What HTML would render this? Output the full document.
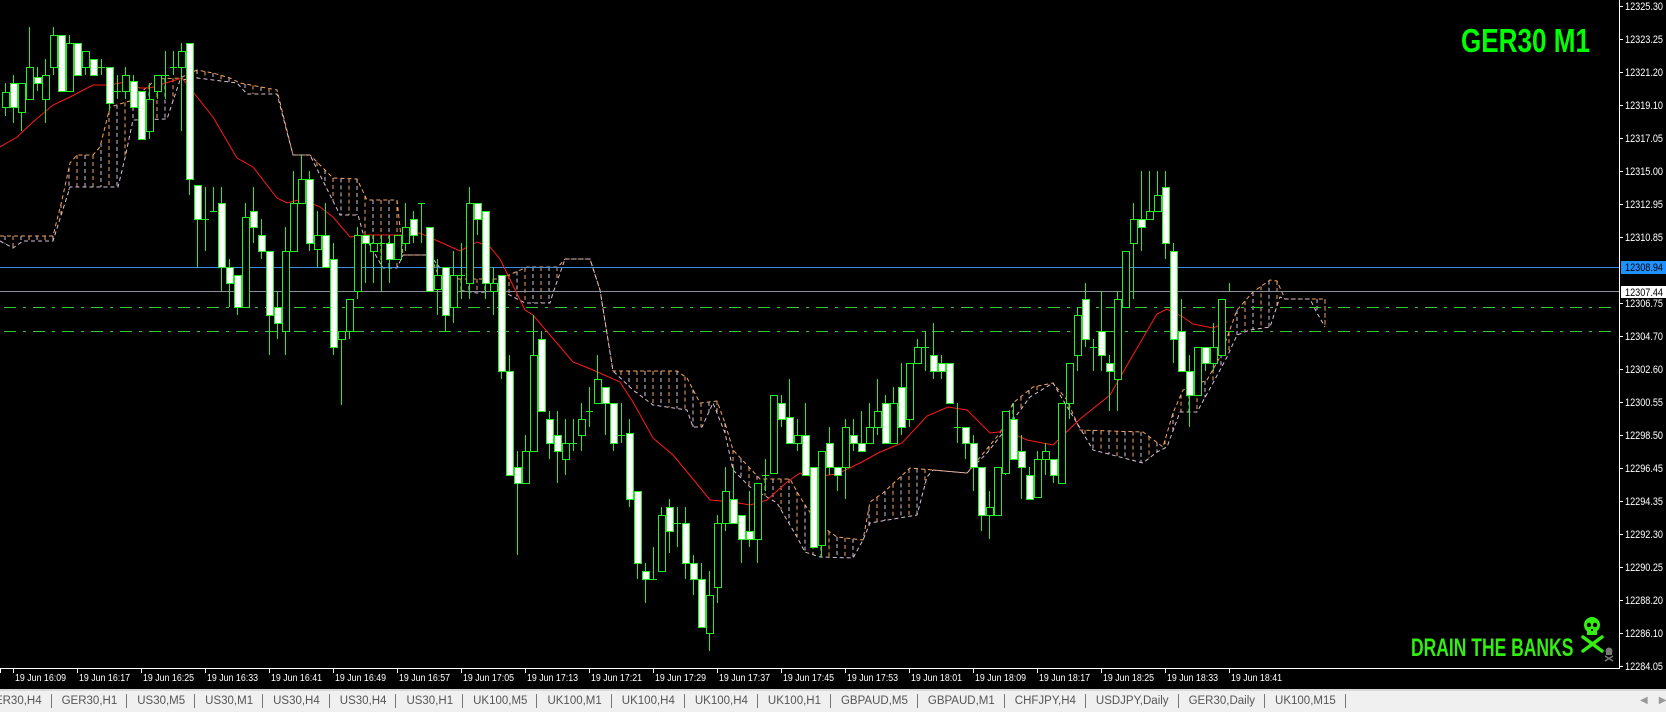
<!DOCTYPE html>
<html><head><meta charset="utf-8"><style>
html,body{margin:0;padding:0;background:#000;width:1666px;height:712px;overflow:hidden;font-family:"Liberation Sans",sans-serif}
#c{position:absolute;left:0;top:0}
.tabs{position:absolute;left:0;top:689px;width:1666px;height:23px;background:#f0f0f0;border-top:2px solid #d8d8d8;box-sizing:border-box;white-space:nowrap;font-size:11.5px;color:#555}
.tabs span{display:inline-block;padding:0 9px 0 10px;border-right:1px solid #777;line-height:14px;margin-top:3px}
.t1{position:absolute;left:1461px;top:22px;color:#00ff00;font-weight:bold;font-size:33px;transform:scaleX(0.79);transform-origin:0 0;letter-spacing:0px}
.t2{position:absolute;left:1411px;top:634px;color:#33ee11;font-weight:bold;font-size:25px;transform:scaleX(0.70);transform-origin:0 0}
</style></head><body>
<svg id="c" width="1666" height="712" xmlns="http://www.w3.org/2000/svg"></svg>
<div class="t1">GER30 M1</div>
<div class="t2">DRAIN THE BANKS</div>
<div class="tabs"><span style="margin-left:-24px">GER30,H4</span><span>GER30,H1</span><span>US30,M5</span><span>US30,M1</span><span>US30,H4</span><span>US30,H4</span><span>US30,H1</span><span>UK100,M5</span><span>UK100,M1</span><span>UK100,H4</span><span>UK100,H4</span><span>UK100,H1</span><span>GBPAUD,M5</span><span>GBPAUD,M1</span><span>CHFJPY,H4</span><span>USDJPY,Daily</span><span>GER30,Daily</span><span>UK100,M15</span><span style="position:absolute;left:1630px;border:none;color:#999;font-size:10px">◀&nbsp;&nbsp;&nbsp;&nbsp;▶</span></div>
<script>
var s='';
function L(x1,y1,x2,y2,c,w,d){s+='<line x1="'+x1+'" y1="'+y1+'" x2="'+x2+'" y2="'+y2+'" stroke="'+c+'" stroke-width="'+(w||1)+'"'+(d?' stroke-dasharray="'+d+'"':'')+'/>';}
function T(x,y,t,c,sz,tl){s+='<text x="'+x+'" y="'+y+'" fill="'+c+'" font-size="'+sz+'" font-family="Liberation Sans,sans-serif"'+(tl?' textLength="'+tl+'" lengthAdjust="spacingAndGlyphs"':'')+'>'+t+'</text>';}
function interp(P,x){for(var i=0;i<P.length-1;i++){if(x>=P[i][0]&&x<=P[i+1][0]){var a=P[i],b=P[i+1];if(b[0]==a[0])return a[1];return a[1]+(b[1]-a[1])*(x-a[0])/(b[0]-a[0]);}}return null;}
var U=[[0,236],[53,236],[62,200],[70,163],[77,155],[93,155],[100,147],[110,107],[133,100],[147,87],[157,79],[180,78],[197,70],[213,73],[230,78],[240,83],[277,90],[293,155],[310,155],[333,178],[357,179],[367,200],[397,200],[403,255],[430,255],[440,279],[500,279],[527,267],[558,267],[565,259],[590,259],[600,290],[613,371],[677,371],[687,378],[700,403],[717,401],[725,423],[733,450],[760,479],[790,479],[800,497],[817,523],[837,537],[863,540],[870,502],[883,493],[910,468],[933,470],[967,473],[1000,433],[1013,403],[1033,387],[1053,383],[1067,400],[1080,430],[1143,432],[1163,447],[1173,413],[1183,390],[1207,380],[1220,357],[1237,310],[1253,292],[1270,280],[1277,281],[1285,299],[1325,299],[1325,327]];
var Lw=[[0,241],[13,248],[23,241],[53,241],[70,187],[118,187],[125,158],[133,120],[167,119],[180,80],[197,78],[237,83],[247,94],[277,94],[293,155],[310,155],[340,215],[358,215],[363,233],[383,268],[397,268],[403,255],[430,255],[457,290],[477,293],[500,290],[525,303],[550,303],[553,293],[565,259],[590,259],[600,290],[613,371],[633,390],[653,405],[687,410],[693,427],[702,427],[713,403],[725,433],[733,470],[750,487],[777,503],[797,537],[805,552],[820,557],[853,558],[863,540],[870,523],[917,515],[927,477],[933,470],[967,473],[987,453],[1013,420],[1030,397],[1053,383],[1063,400],[1080,428],[1093,450],[1143,463],[1157,452],[1167,447],[1180,412],[1197,412],[1213,383],[1227,357],[1237,335],[1250,330],[1270,327],[1280,297],[1285,299],[1310,299],[1317,313],[1325,327]];
for(var x=5;x<=1325;x+=8){var a=interp(U,x),b=interp(Lw,x);if(a==null||b==null)continue;if(Math.abs(a-b)>4){L(x,Math.min(a,b),x,Math.max(a,b),(x/8|0)%2?'#f4a460':'#d8bfd8',1,'4,3');}}
function poly(P,c){var p=P.map(function(q){return q.join(',')}).join(' ');s+='<polyline points="'+p+'" fill="none" stroke="'+c+'" stroke-width="1" stroke-dasharray="4,3"/>';}
poly(U,'#f4a460');poly(Lw,'#d8bfd8');
L(0,267.5,1619,267.5,'#3a8ee6',1);L(0,291.5,1619,291.5,'#8890a0',1);
L(4,307.5,1617,307.5,'#33cc33',1,'12,7,3,7');L(4,331.5,1617,331.5,'#33cc33',1,'12,7,3,7');
var M=[[0,147],[17,137],[33,122],[53,105],[70,97],[93,85],[110,85],[125,82],[140,88],[150,88],[182,78],[213,117],[237,158],[253,167],[277,198],[287,203],[302,199],[320,207],[333,217],[350,237],[367,235],[400,235],[420,233],[440,242],[460,251],[477,242],[490,247],[500,259],[525,310],[533,315],[550,335],[573,362],[593,370],[620,382],[633,402],[653,438],[673,455],[693,479],[710,500],[733,502],[750,505],[767,500],[787,482],[800,473],[813,477],[837,474],[860,463],[880,452],[902,443],[927,416],[948,407],[967,410],[990,433],[1007,431],[1027,440],[1053,445],[1080,419],[1110,395],[1133,355],[1157,314],[1167,309],[1183,317],[1193,324],[1213,328],[1227,322]];
s+='<polyline points="'+M.map(function(q){return q.join(',')}).join(' ')+'" fill="none" stroke="#ff1a1a" stroke-width="1"/>';
var C=[[92,107,83,116,0],[83,107,75,123,1],[83,112,83,131,0],[67,99,27,99,0],[77,83,67,91,1],[75,99,59,123,0],[35,67,27,75,0],[35,91,35,91,1],[43,91,35,91,0],[43,75,43,75,1],[51,67,51,75,0],[59,75,59,75,1],[67,67,59,75,0],[67,103,67,111,1],[91,91,75,99,0],[75,91,67,99,0],[81,107,75,107,1],[91,139,91,139,1],[99,131,83,139,0],[75,91,75,99,0],[75,75,51,99,0],[67,67,51,75,0],[51,67,43,131,0],[43,179,43,195,1],[185,219,185,267,1],[219,219,187,251,0],[211,211,187,211,0],[203,267,187,291,1],[267,283,259,307,1],[275,307,275,315,1],[217,307,203,307,0],[211,227,187,243,1],[235,251,219,259,1],[251,315,251,355,1],[307,323,291,339,1],[251,331,227,355,0],[203,251,171,251,0],[179,203,155,203,0],[179,243,171,251,1],[235,249,211,267,0],[235,267,203,267,1],[259,347,243,355,1],[331,339,331,405,0],[299,331,299,339,0],[235,291,227,299,0],[235,243,235,283,1],[243,251,235,283,0],[243,243,235,291,0],[243,259,235,283,1],[235,259,235,259,0],[227,243,203,251,0],[219,235,211,243,1],[203,203,203,243,0],[227,291,227,291,1],[275,289,259,315,0],[267,315,267,331,1],[275,307,251,323,0],[275,275,243,299,0],[203,283,187,299,0],[203,219,203,235,1],[211,283,211,299,1],[283,291,267,315,0],[275,371,275,379,1],[371,475,355,475,1],[467,483,451,555,1],[451,483,435,483,0],[355,451,315,451,0],[339,411,331,411,1],[419,443,411,459,1],[435,451,411,483,1],[443,459,419,475,0],[443,443,419,451,0],[419,435,403,451,0],[411,411,387,427,0],[379,403,355,403,0],[387,403,387,435,1],[403,443,403,451,1],[435,435,403,443,0],[433,499,419,507,1],[491,563,491,579,1],[571,579,563,603,1],[579,579,547,579,0],[515,571,507,571,0],[507,531,499,553,1],[523,523,507,547,0],[523,563,507,579,1],[563,579,555,595,1],[579,627,563,627,1],[595,633,571,651,0],[523,587,515,603,0],[491,523,467,531,0],[499,523,467,523,1],[515,539,515,563,1],[531,539,491,547,1],[483,539,483,563,0],[475,475,459,491,0],[395,473,395,473,0],[403,419,395,427,1],[417,443,379,443,1],[435,443,419,451,0],[435,475,403,475,1],[467,547,467,547,1],[451,545,451,557,0],[443,467,427,475,1],[467,475,467,491,1],[427,467,419,499,0],[435,443,419,451,1],[443,451,411,451,1],[427,443,403,443,0],[411,427,379,435,0],[403,443,395,443,1],[403,443,387,443,0],[387,427,363,435,1],[363,419,363,427,0],[347,363,339,363,0],[347,347,331,371,0],[355,371,323,379,1],[363,371,355,379,1],[363,403,363,403,1],[427,427,403,443,0],[427,443,427,459,1],[443,467,435,491,1],[467,515,467,531,1],[507,515,491,539,0],[467,515,467,515,0],[411,473,411,475,0],[419,459,403,459,1],[451,467,435,499,1],[475,499,467,499,1],[459,497,451,497,0],[451,459,443,475,0],[459,475,459,483,1],[403,483,403,483,0],[363,403,363,419,0],[315,355,307,371,0],[299,339,283,347,1],[347,347,339,371,0],[331,355,291,371,1],[363,371,355,411,1],[299,379,291,411,0],[251,307,251,307,0],[219,243,203,299,0],[219,227,171,251,1],[211,219,171,219,0],[195,211,171,211,0],[187,243,171,259,1],[251,339,243,363,1],[331,371,299,371,1],[371,395,355,427,1],[347,395,347,395,0],[347,363,347,371,1],[347,363,323,371,0],[299,355,299,355,0],[null,null,283,291,0]];
var G='#22ee22';
for(var i=0;i<C.length;i++){var c=C[i],x=5+8*i;L(x+.5,c[2],x+.5,c[3],G,1);if(c[0]==null)continue;if(c[0]==c[1]){L(x-3,c[0]+.5,x+4,c[0]+.5,G,1);}else{s+='<rect x="'+(x-2.5)+'" y="'+(c[0]+.5)+'" width="7" height="'+(c[1]-c[0])+'" fill="'+(c[4]?'#fff':'#000')+'" stroke="'+G+'" stroke-width="1"/>';}}
L(1619.5,0,1619.5,669,'#fff',1);L(0,668.5,1620,668.5,'#fff',1);
var P=[['12325.30',6],['12323.25',39],['12321.20',72],['12319.10',105],['12317.05',138],['12315.00',171],['12312.95',204],['12310.85',237],['12306.75',303],['12304.70',336],['12302.60',369],['12300.55',402],['12298.50',435],['12296.45',468],['12294.35',501],['12292.30',534],['12290.25',567],['12288.20',600],['12286.10',633],['12284.05',666]];
P.forEach(function(p){L(1620,p[1]+.5,1623,p[1]+.5,'#fff',1);T(1625,p[1]+4,p[0],'#fff',11,38);});
s+='<rect x="1621" y="261" width="45" height="13" fill="#1e90ff"/>';T(1625,271,'12308.94','#000',11,38);
s+='<rect x="1621" y="286" width="45" height="12" fill="#fff"/>';T(1625,296,'12307.44','#000',11,38);
var tl=['16:09','16:17','16:25','16:33','16:41','16:49','16:57','17:05','17:13','17:21','17:29','17:37','17:45','17:53','18:01','18:09','18:17','18:25','18:33','18:41'];
L(0.5,669,0.5,673,'#fff',1);
tl.forEach(function(t,k){var x=13+64*k;L(x+.5,669,x+.5,673,'#fff',1);T(x+2,681,'19 Jun '+t,'#fff',10,51);});
var g='#33ee11';
s+='<g fill="'+g+'"><ellipse cx="1592" cy="625" rx="8" ry="8"/><rect x="1587" y="628" width="10" height="7"/></g>';
s+='<g fill="#000"><circle cx="1589" cy="625" r="2.2"/><circle cx="1595" cy="625" r="2.2"/><rect x="1591" y="629" width="2" height="2"/></g>';
s+='<g stroke="'+g+'" stroke-width="3.5" stroke-linecap="round"><line x1="1583" y1="637" x2="1602" y2="651"/><line x1="1602" y1="637" x2="1583" y2="651"/></g>';
s+='<g fill="#777"><circle cx="1609" cy="651" r="3.5"/><rect x="1606" y="652" width="6" height="3"/></g><g stroke="#777" stroke-width="1.5"><line x1="1605" y1="656" x2="1613" y2="661"/><line x1="1613" y1="656" x2="1605" y2="661"/></g>';
document.getElementById('c').innerHTML=s;
</script>
</body></html>
